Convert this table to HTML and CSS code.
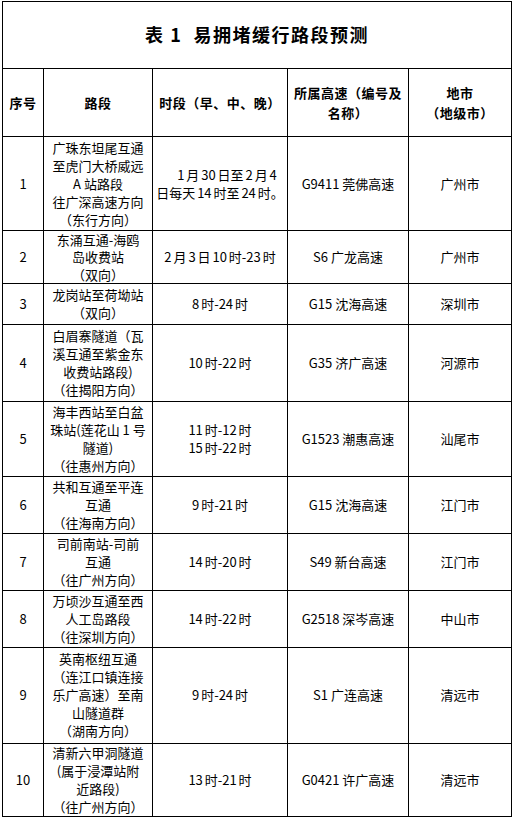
FILE: index.html
```html
<!DOCTYPE html>
<html lang="zh-CN">
<head>
<meta charset="utf-8">
<title>表1 易拥堵缓行路段预测</title>
<link rel="stylesheet" href="styles.css">
</head>
<body>
<table class="tbl">
  <colgroup>
    <col class="c1"><col class="c2"><col class="c3"><col class="c4"><col class="c5">
  </colgroup>
  <tr class="r-title"><td colspan="5" class="title">表 1&nbsp; 易拥堵缓行路段预测</td></tr>
  <tr class="r-head">
    <th>序号</th>
    <th>路段</th>
    <th>时段（早、中、晚）</th>
    <th>所属高速（编号及<br>名称）</th>
    <th>地市<br>（地级市）</th>
  </tr>
  <tr class="r1">
    <td>1</td>
    <td>广珠东坦尾互通<br>至虎门大桥威远<br>A 站路段<br>往广深高速方向<br>（东行方向）</td>
    <td class="time"><span class="ind">1 月 30 日至 2 月 4</span><br>日每天 14 时至 24 时。</td>
    <td>G9411 莞佛高速</td>
    <td>广州市</td>
  </tr>
  <tr class="r2">
    <td>2</td>
    <td>东涌互通-海鸥<br>岛收费站<br>（双向）</td>
    <td class="time">2 月 3 日 10 时-23 时</td>
    <td>S6 广龙高速</td>
    <td>广州市</td>
  </tr>
  <tr class="r3">
    <td>3</td>
    <td>龙岗站至荷坳站<br>（双向）</td>
    <td class="time">8 时-24 时</td>
    <td>G15 沈海高速</td>
    <td>深圳市</td>
  </tr>
  <tr class="r4">
    <td>4</td>
    <td>白眉寨隧道（瓦<br>溪互通至紫金东<br>收费站路段)<br>（往揭阳方向）</td>
    <td class="time">10 时-22 时</td>
    <td>G35 济广高速</td>
    <td>河源市</td>
  </tr>
  <tr class="r5">
    <td>5</td>
    <td>海丰西站至白盆<br>珠站(莲花山 1 号<br>隧道)<br>（往惠州方向）</td>
    <td class="time">11 时-12 时<br>15 时-22 时</td>
    <td>G1523 潮惠高速</td>
    <td>汕尾市</td>
  </tr>
  <tr class="r6">
    <td>6</td>
    <td>共和互通至平连<br>互通<br>（往海南方向）</td>
    <td class="time">9 时-21 时</td>
    <td>G15 沈海高速</td>
    <td>江门市</td>
  </tr>
  <tr class="r7">
    <td>7</td>
    <td>司前南站-司前<br>互通<br>（往广州方向）</td>
    <td class="time">14 时-20 时</td>
    <td>S49 新台高速</td>
    <td>江门市</td>
  </tr>
  <tr class="r8">
    <td>8</td>
    <td>万顷沙互通至西<br>人工岛路段<br>（往深圳方向）</td>
    <td class="time">14 时-22 时</td>
    <td>G2518 深岑高速</td>
    <td>中山市</td>
  </tr>
  <tr class="r9">
    <td>9</td>
    <td>英南枢纽互通<br>（连江口镇连接<br>乐广高速）至南<br>山隧道群<br>（湖南方向）</td>
    <td class="time">9 时-24 时</td>
    <td>S1 广连高速</td>
    <td>清远市</td>
  </tr>
  <tr class="r10">
    <td>10</td>
    <td>清新六甲洞隧道<br>(属于浸潭站附<br>近路段)<br>（往广州方向）</td>
    <td class="time">13 时-21 时</td>
    <td>G0421 许广高速</td>
    <td>清远市</td>
  </tr>
</table>
</body>
</html>
```

FILE: styles.css
```css
html, body {
  margin: 0;
  padding: 0;
  background: #fff;
}

body {
  padding: 1px 0 0 2px;
  font-family: "Noto Sans CJK SC", "Noto Sans", sans-serif;
  color: #000;
}

.tbl {
  border-collapse: collapse;
  table-layout: fixed;
  width: 509px;
}

.c1 { width: 41px; }
.c2 { width: 109px; }
.c3 { width: 135px; }
.c4 { width: 121px; }
.c5 { width: 103px; }

.tbl td, .tbl th {
  border: 1px solid #000;
  padding: 0;
  text-align: center;
  vertical-align: middle;
  font-size: 13px;
  line-height: 18px;
  font-weight: 400;
  overflow: hidden;
}

.tbl th {
  font-weight: 700;
  line-height: 20px;
  letter-spacing: 0.5px;
}

.tbl td.title {
  font-size: 18px;
  font-weight: 700;
  letter-spacing: 1.5px;
  line-height: 24px;
  padding-bottom: 2px;
}

.tbl td.time {
  word-spacing: -1px;
}

.ind {
  padding-left: 14px;
}

.r-title { height: 67px; }
.r-head { height: 68px; }
.r1 { height: 94px; }
.r2 { height: 52px; }
.r2 td { line-height: 17.3px; }
.r3 { height: 41px; }
.r4 { height: 77px; }
.r5 { height: 75px; }
.r6 { height: 57px; }
.r7 { height: 57px; }
.r8 { height: 57px; }
.r9 { height: 96px; }
.r10 { height: 73px; }
```
